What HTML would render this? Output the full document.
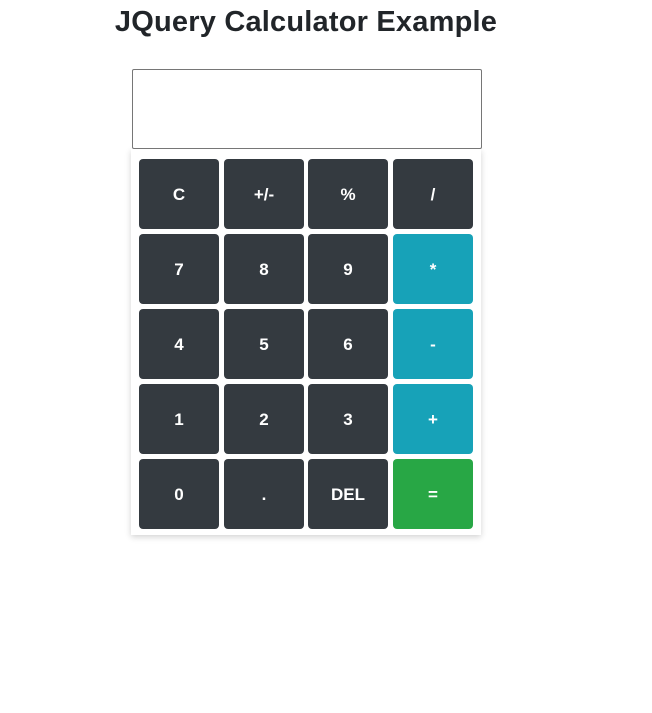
<!DOCTYPE html>
<html><head><style>
body{margin:0;background:#fff;font-family:"Liberation Sans",sans-serif;}
h1{position:absolute;left:0;width:612px;top:2px;margin:0;text-align:center;font-size:29px;font-weight:bold;letter-spacing:0.2px;color:#212529;line-height:40px;}
.inp{position:absolute;left:132px;top:69px;width:348px;height:78px;border:1px solid #767676;border-radius:2px;background:#fff;}
.box{position:absolute;left:131px;top:149px;width:350px;height:386px;background:#fff;box-shadow:0 2px 6px rgba(0,0,0,.18);}
.b{position:absolute;width:80px;height:70px;border-radius:4px;background:#343a40;color:#fff;font-weight:bold;font-size:17px;display:flex;align-items:center;justify-content:center;padding-top:2px;box-sizing:border-box;}
.i{background:#17a2b8}.g{background:#28a745}
</style></head><body>
<h1>JQuery Calculator Example</h1>
<div class="box"></div>
<div class="inp"></div>
<div class="b" style="left:139px;top:159px">C</div>
<div class="b" style="left:224px;top:159px">+/-</div>
<div class="b" style="left:308px;top:159px">%</div>
<div class="b" style="left:393px;top:159px">/</div>
<div class="b" style="left:139px;top:234px">7</div>
<div class="b" style="left:224px;top:234px">8</div>
<div class="b" style="left:308px;top:234px">9</div>
<div class="b i" style="left:393px;top:234px">*</div>
<div class="b" style="left:139px;top:309px">4</div>
<div class="b" style="left:224px;top:309px">5</div>
<div class="b" style="left:308px;top:309px">6</div>
<div class="b i" style="left:393px;top:309px">-</div>
<div class="b" style="left:139px;top:384px">1</div>
<div class="b" style="left:224px;top:384px">2</div>
<div class="b" style="left:308px;top:384px">3</div>
<div class="b i" style="left:393px;top:384px">+</div>
<div class="b" style="left:139px;top:459px">0</div>
<div class="b" style="left:224px;top:459px">.</div>
<div class="b" style="left:308px;top:459px">DEL</div>
<div class="b g" style="left:393px;top:459px">=</div>
</body></html>
